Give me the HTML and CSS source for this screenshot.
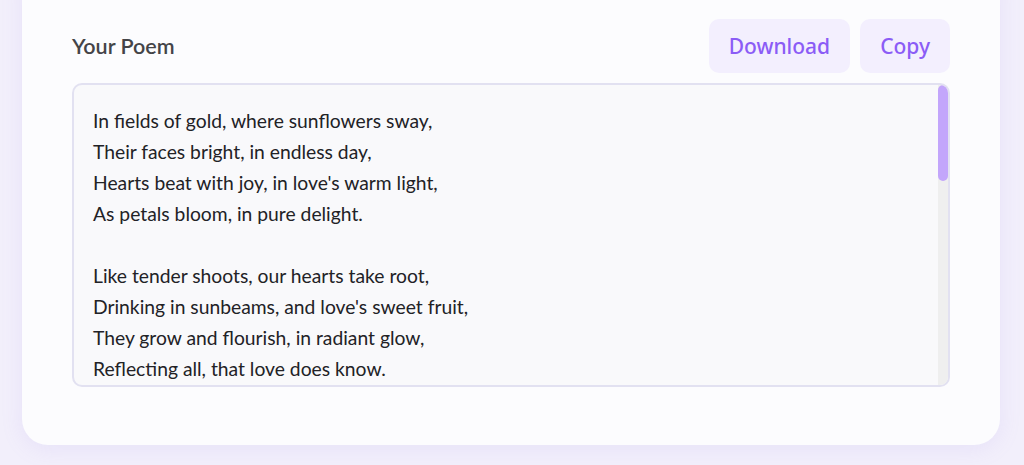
FILE: index.html
```html
<!DOCTYPE html>
<html lang="en">
<head>
<meta charset="utf-8">
<title>Your Poem</title>
<link rel="stylesheet" href="styles.css">
</head>
<body>
<main class="card">
  <div class="poem-header">
    <h2 class="poem-title">Your Poem</h2>
    <div class="actions">
      <button class="btn" type="button">Download</button>
      <button class="btn" type="button">Copy</button>
    </div>
  </div>
  <div class="poem-box">
    <div class="poem-text">In fields of gold, where sunflowers sway,
Their faces bright, in endless day,
Hearts beat with joy, in love's warm light,
As petals bloom, in pure delight.

Like tender shoots, our hearts take root,
Drinking in sunbeams, and love's sweet fruit,
They grow and flourish, in radiant glow,
Reflecting all, that love does know.

Through summer's heat and autumn's chill,
Our love stands tall upon the hill,
With golden crowns that face the sun,
Two hearts that beat and shine as one.

When evening falls and stars appear,
The gentle breeze still whispers near,
Of fields of gold and skies so wide,
Where love and sunflowers abide.

And though the seasons come and go,
The seeds of love will always grow,
In every heart, in every ray,
In fields of gold, where sunflowers sway.

So let us wander, hand in hand,
Across this warm and golden land,
Forever bright, forever true,
My sunflower heart belongs to you.</div>
    <div class="scrollbar" aria-hidden="true">
      <div class="scrollbar-thumb"></div>
    </div>
  </div>
</main>
</body>
</html>
```

FILE: styles.css
```css
* {
  box-sizing: border-box;
}

html, body {
  margin: 0;
  padding: 0;
}

body {
  background: #f2effb;
  font-family: "Lato", "Liberation Sans", sans-serif;
  height: 465px;
  overflow: hidden;
}

.card {
  display: flex;
  flex-direction: column;
  gap: 10px;
  width: 978px;
  margin: -40px 0 0 22px;
  padding: 59px 50px 58px;
  background: #fcfcfe;
  border-radius: 26px;
  box-shadow: 0 4px 22px rgba(160, 130, 230, 0.12);
}

.poem-header {
  display: flex;
  align-items: center;
  justify-content: space-between;
}

.poem-title {
  margin: 0;
  font-size: 21.5px;
  font-weight: 600;
  color: #444448;
}

.actions {
  display: flex;
  gap: 10px;
}

.btn {
  height: 54px;
  padding: 0 20px;
  border: none;
  border-radius: 10px;
  background: #f3effe;
  color: #8b5cf6;
  font-family: "Noto Sans", "Open Sans", sans-serif;
  font-size: 21px;
  font-weight: 500;
  cursor: pointer;
}

.poem-box {
  display: flex;
  height: 304px;
  border: 2px solid #e2e1f1;
  border-radius: 10px;
  background: #f9f9fb;
  overflow: hidden;
}

.poem-text {
  flex: 1;
  padding: 20px 19px;
  color: #222226;
  font-size: 19.3px;
  line-height: 31px;
  white-space: pre-wrap;
  overflow: hidden;
}

.scrollbar {
  display: flex;
  flex-direction: column;
  width: 10px;
  background: #efefef;
}

.scrollbar-thumb {
  height: 96px;
  background: #c3a6fb;
  border-radius: 5px;
}
```
